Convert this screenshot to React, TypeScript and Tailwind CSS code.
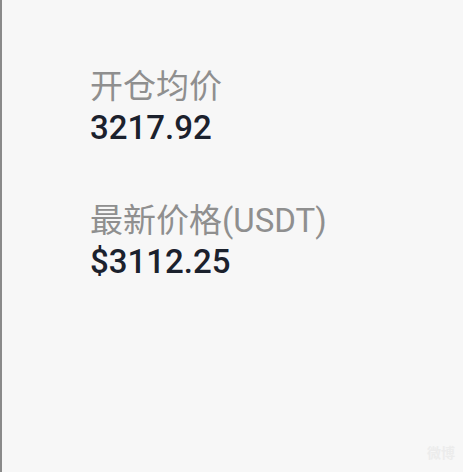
const stats = [
  { label: "开仓均价", value: "3217.92" },
  { label: "最新价格(USDT)", value: "$3112.25" },
];

export default function App() {
  return (
    <div
      className="relative h-[472px] w-[463px] overflow-hidden border-l-2 border-[#8a8a8a] bg-[#f7f7f7] pl-[88px] pt-[67px]"
      style={{ fontFamily: 'Roboto, "Noto Sans CJK SC", sans-serif' }}
    >
      <div className="flex flex-col gap-[53px]">
        {stats.map((stat) => (
          <div key={stat.label} className="flex flex-col">
            <span className="text-[33px] leading-[40px] text-[#8f8f8f]">{stat.label}</span>
            <span className="text-[33px] font-medium leading-[41px] text-[#1b212d]">{stat.value}</span>
          </div>
        ))}
      </div>
      <div className="absolute bottom-[8px] right-[8px] text-[14px] font-bold text-[#ececec]">
        微博
      </div>
    </div>
  );
}
